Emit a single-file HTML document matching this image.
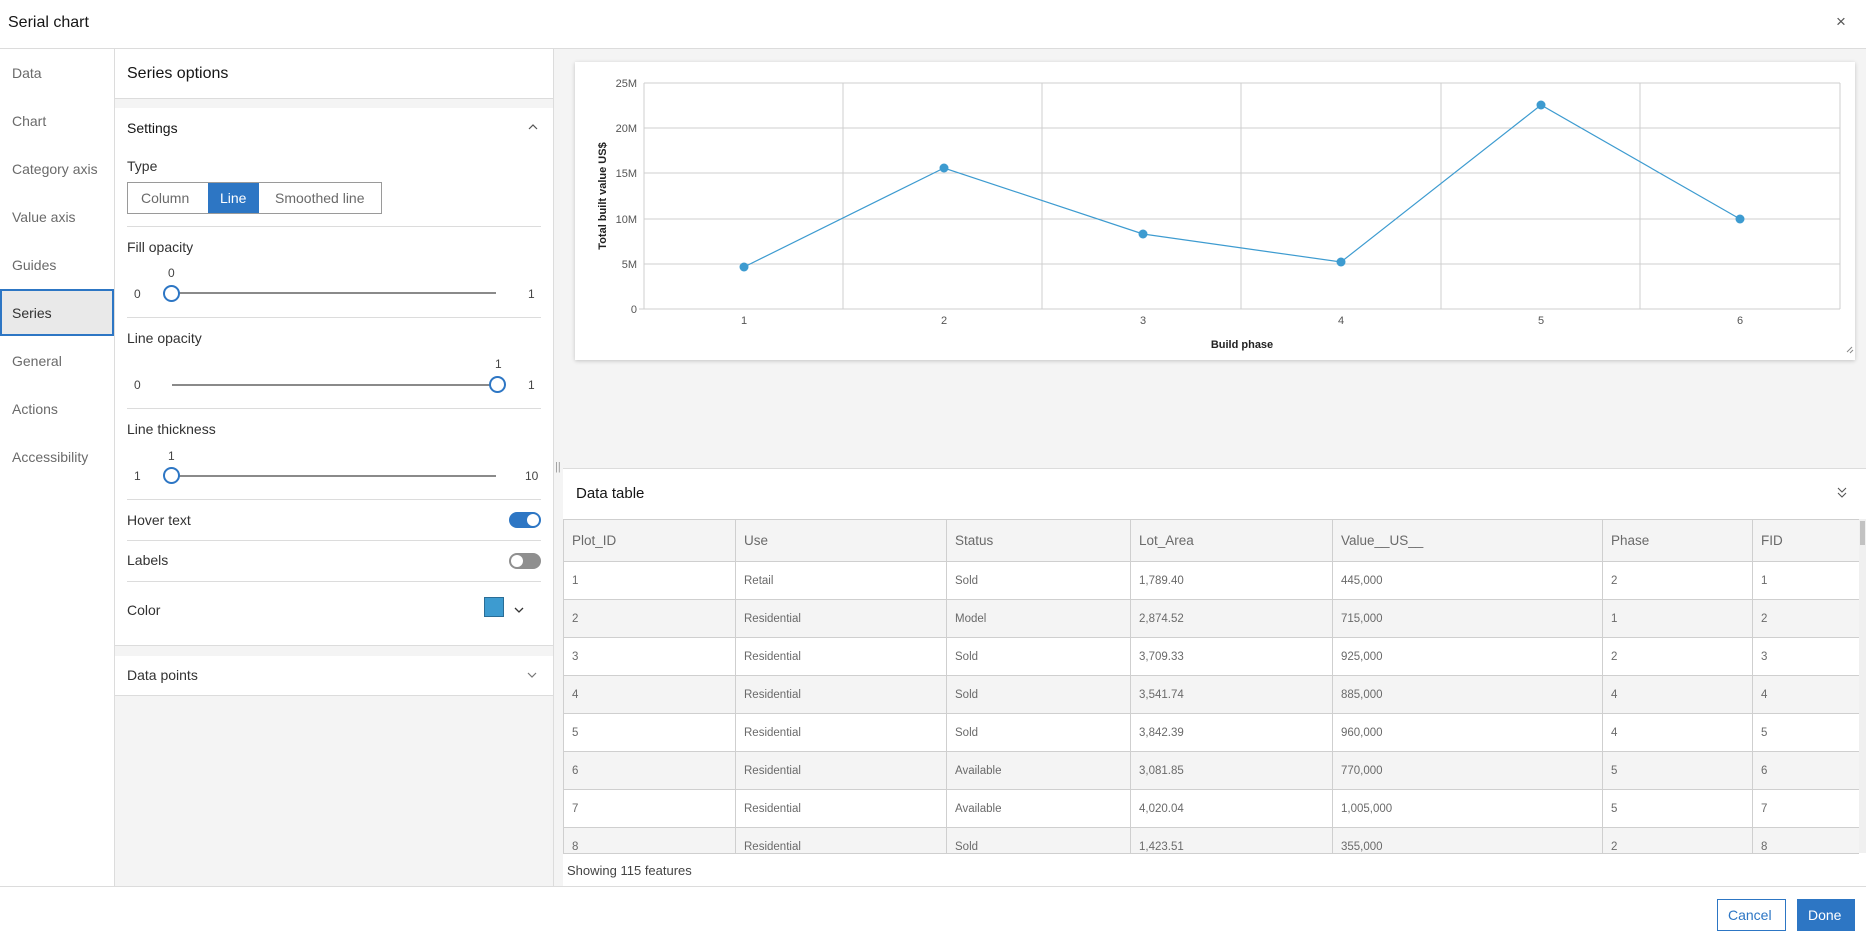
<!DOCTYPE html>
<html><head><meta charset="utf-8"><style>
*{box-sizing:border-box;margin:0;padding:0}
body{width:1866px;height:940px;position:relative;font-family:"Liberation Sans",sans-serif;background:#fff;color:#323232;overflow:hidden}
.a{position:absolute}
.t{position:absolute;white-space:nowrap}
.nav{font-size:14px;color:#6a6a6a;left:12px}
.lbl{font-size:14px;color:#323232}
.sep{position:absolute;left:127px;width:414px;height:1px;background:#dcdcdc}
.small{font-size:12px;color:#444}
.track{position:absolute;height:2px;background:#8a8a8a;left:172px;width:324px}
.thumb{position:absolute;width:17px;height:17px;border:2px solid #2d76c4;border-radius:50%;background:#fff}
td{border:1px solid #cfcfcf;font-size:11.5px;color:#6a6a6a;padding:0 8px;height:38px}
tr.h td{font-size:13.5px;height:42px;background:#f4f4f4}
tr:nth-child(odd) td{background:#f4f4f4}
table{border-collapse:collapse;position:absolute;left:563px;top:519px;width:1296px;table-layout:fixed}
</style></head><body>
<div class="t" style="left:8px;top:14px;font-size:16px;color:#151515">Serial chart</div>
<div class="t" style="left:1836px;top:12px;font-size:17px;color:#555">×</div>
<div class="a" style="left:0;top:48px;width:1866px;height:1px;background:#dcdcdc"></div>
<div class="a" style="left:114px;top:48px;width:1px;height:838px;background:#dcdcdc"></div>
<div class="t nav" style="top:65px">Data</div>
<div class="t nav" style="top:113px">Chart</div>
<div class="t nav" style="top:161px">Category axis</div>
<div class="t nav" style="top:209px">Value axis</div>
<div class="t nav" style="top:257px">Guides</div>
<div class="a" style="left:0;top:289px;width:114px;height:47px;background:#e9e9e9;border:2px solid #2d76c4"></div>
<div class="t nav" style="top:305px;color:#323232">Series</div>
<div class="t nav" style="top:353px">General</div>
<div class="t nav" style="top:401px">Actions</div>
<div class="t nav" style="top:449px">Accessibility</div>
<div class="a" style="left:115px;top:49px;width:438px;height:837px;background:#f4f4f4"></div>
<div class="a" style="left:115px;top:49px;width:438px;height:50px;background:#fff;border-bottom:1px solid #dcdcdc"></div>
<div class="t" style="left:127px;top:65px;font-size:16px;color:#151515">Series options</div>
<div class="a" style="left:115px;top:108px;width:438px;height:538px;background:#fff;border-bottom:1px solid #dcdcdc"></div>
<div class="t lbl" style="left:127px;top:120px;color:#151515">Settings</div>
<svg class="a" style="left:528px;top:123px" width="10" height="8"><path d="M1 6L5 2L9 6" fill="none" stroke="#555" stroke-width="1.2"/></svg>
<div class="t lbl" style="left:127px;top:158px">Type</div>
<div class="a" style="left:127px;top:182px;width:255px;height:32px;border:1px solid #9a9a9a"></div>
<div class="t" style="left:141px;top:190px;font-size:14px;color:#6a6a6a">Column</div>
<div class="a" style="left:208px;top:183px;width:51px;height:30px;background:#2d76c4"></div>
<div class="t" style="left:220px;top:190px;font-size:14px;color:#fff">Line</div>
<div class="t" style="left:275px;top:190px;font-size:14px;color:#6a6a6a">Smoothed line</div>
<div class="sep" style="top:226px"></div>
<div class="t lbl" style="left:127px;top:239px">Fill opacity</div>
<div class="t small" style="left:168px;top:266px">0</div>
<div class="t small" style="left:134px;top:287px">0</div>
<div class="track" style="top:292px"></div>
<div class="thumb" style="left:163px;top:285px"></div>
<div class="t small" style="left:528px;top:287px">1</div>
<div class="sep" style="top:317px"></div>
<div class="t lbl" style="left:127px;top:330px">Line opacity</div>
<div class="t small" style="left:495px;top:357px">1</div>
<div class="t small" style="left:134px;top:378px">0</div>
<div class="track" style="top:384px"></div>
<div class="thumb" style="left:489px;top:376px"></div>
<div class="t small" style="left:528px;top:378px">1</div>
<div class="sep" style="top:408px"></div>
<div class="t lbl" style="left:127px;top:421px">Line thickness</div>
<div class="t small" style="left:168px;top:449px">1</div>
<div class="t small" style="left:134px;top:469px">1</div>
<div class="track" style="top:475px"></div>
<div class="thumb" style="left:163px;top:467px"></div>
<div class="t small" style="left:525px;top:469px">10</div>
<div class="sep" style="top:499px"></div>
<div class="t lbl" style="left:127px;top:512px">Hover text</div>
<div class="a" style="left:509px;top:512px;width:32px;height:16px;border-radius:8px;background:#2d76c4"></div>
<div class="a" style="left:527px;top:514px;width:12px;height:12px;border-radius:50%;background:#fff"></div>
<div class="sep" style="top:540px"></div>
<div class="t lbl" style="left:127px;top:552px">Labels</div>
<div class="a" style="left:509px;top:553px;width:32px;height:16px;border-radius:8px;background:#8f8f8f"></div>
<div class="a" style="left:511px;top:555px;width:12px;height:12px;border-radius:50%;background:#fff"></div>
<div class="sep" style="top:581px"></div>
<div class="t lbl" style="left:127px;top:602px">Color</div>
<div class="a" style="left:484px;top:597px;width:20px;height:20px;background:#3d9bd0;border:1px solid #2a6d96"></div>
<svg class="a" style="left:514px;top:607px" width="10" height="7"><path d="M1 1L5 5L9 1" fill="none" stroke="#333" stroke-width="1.3"/></svg>
<div class="a" style="left:115px;top:656px;width:438px;height:40px;background:#fff;border-bottom:1px solid #dcdcdc"></div>
<div class="t lbl" style="left:127px;top:667px">Data points</div>
<svg class="a" style="left:527px;top:672px" width="10" height="7"><path d="M1 1L5 5L9 1" fill="none" stroke="#777" stroke-width="1.2"/></svg>
<div class="a" style="left:553px;top:48px;width:1px;height:838px;background:#dcdcdc"></div>
<div class="a" style="left:554px;top:49px;width:1312px;height:837px;background:#f4f4f4"></div>
<div class="a" style="left:575px;top:62px;width:1280px;height:298px;background:#fff;box-shadow:0 1px 4px rgba(0,0,0,.2)"></div>
<svg class="a" style="left:575px;top:62px" width="1280" height="298" font-family="Liberation Sans, sans-serif">
<g stroke="#cfcfcf" stroke-width="1">
<line x1="69" y1="21" x2="1265" y2="21"/><line x1="69" y1="66" x2="1265" y2="66"/><line x1="69" y1="111" x2="1265" y2="111"/><line x1="69" y1="157" x2="1265" y2="157"/><line x1="69" y1="202" x2="1265" y2="202"/><line x1="64" y1="247" x2="1265" y2="247"/>
<line x1="69" y1="21" x2="69" y2="247"/><line x1="268" y1="21" x2="268" y2="247"/><line x1="467" y1="21" x2="467" y2="247"/><line x1="666" y1="21" x2="666" y2="247"/><line x1="866" y1="21" x2="866" y2="247"/><line x1="1065" y1="21" x2="1065" y2="247"/><line x1="1265" y1="21" x2="1265" y2="247"/>
</g>
<g font-size="11" fill="#555" text-anchor="end"><text x="62" y="25">25M</text><text x="62" y="70">20M</text><text x="62" y="115">15M</text><text x="62" y="161">10M</text><text x="62" y="206">5M</text><text x="62" y="251">0</text></g>
<g font-size="11" fill="#555" text-anchor="middle"><text x="169" y="262">1</text><text x="369" y="262">2</text><text x="568" y="262">3</text><text x="766" y="262">4</text><text x="966" y="262">5</text><text x="1165" y="262">6</text></g>
<text x="667" y="286" font-size="11" font-weight="bold" fill="#222" text-anchor="middle">Build phase</text>
<text transform="translate(31,134) rotate(-90)" font-size="11" font-weight="bold" fill="#222" text-anchor="middle">Total built value US$</text>
<polyline points="169,205 369,106 568,172 766,200 966,43 1165,157" fill="none" stroke="#3d9bd0" stroke-width="1.2"/>
<g fill="#3d9bd0"><circle cx="169" cy="205" r="4.5"/><circle cx="369" cy="106" r="4.5"/><circle cx="568" cy="172" r="4.5"/><circle cx="766" cy="200" r="4.5"/><circle cx="966" cy="43" r="4.5"/><circle cx="1165" cy="157" r="4.5"/></g>
<path d="M1272 290L1277 285M1275 291L1278 288" stroke="#888"/>
</svg>
<div class="t" style="left:555px;top:461px;font-size:11px;color:#999">||</div>
<div class="a" style="left:563px;top:468px;width:1303px;height:1px;background:#dcdcdc"></div>
<div class="a" style="left:563px;top:469px;width:1303px;height:417px;background:#fff"></div>
<div class="t" style="left:576px;top:485px;font-size:15px;color:#151515">Data table</div>
<svg class="a" style="left:1837px;top:487px" width="10" height="12"><path d="M1 1L5 5L9 1M1 6L5 10L9 6" fill="none" stroke="#555" stroke-width="1.1"/></svg>
<div class="a" style="left:563px;top:519px;width:1296px;height:334px;overflow:hidden">
<table style="left:0;top:0">
<colgroup><col style="width:172px"><col style="width:211px"><col style="width:184px"><col style="width:202px"><col style="width:270px"><col style="width:150px"><col style="width:107px"></colgroup>
<tr class="h"><td>Plot_ID</td><td>Use</td><td>Status</td><td>Lot_Area</td><td>Value__US__</td><td>Phase</td><td>FID</td></tr>
<tr><td>1</td><td>Retail</td><td>Sold</td><td>1,789.40</td><td>445,000</td><td>2</td><td>1</td></tr>
<tr><td>2</td><td>Residential</td><td>Model</td><td>2,874.52</td><td>715,000</td><td>1</td><td>2</td></tr>
<tr><td>3</td><td>Residential</td><td>Sold</td><td>3,709.33</td><td>925,000</td><td>2</td><td>3</td></tr>
<tr><td>4</td><td>Residential</td><td>Sold</td><td>3,541.74</td><td>885,000</td><td>4</td><td>4</td></tr>
<tr><td>5</td><td>Residential</td><td>Sold</td><td>3,842.39</td><td>960,000</td><td>4</td><td>5</td></tr>
<tr><td>6</td><td>Residential</td><td>Available</td><td>3,081.85</td><td>770,000</td><td>5</td><td>6</td></tr>
<tr><td>7</td><td>Residential</td><td>Available</td><td>4,020.04</td><td>1,005,000</td><td>5</td><td>7</td></tr>
<tr><td>8</td><td>Residential</td><td>Sold</td><td>1,423.51</td><td>355,000</td><td>2</td><td>8</td></tr>
</table></div>
<div class="a" style="left:563px;top:853px;width:1296px;height:1px;background:#cfcfcf"></div>
<div class="a" style="left:1859px;top:519px;width:7px;height:334px;background:#f0f0f0"></div>
<div class="a" style="left:1860px;top:521px;width:5px;height:24px;background:#c2c2c2"></div>
<div class="t" style="left:567px;top:863px;font-size:13px;color:#444">Showing 115 features</div>
<div class="a" style="left:0;top:886px;width:1866px;height:1px;background:#dcdcdc"></div>
<div class="a" style="left:1717px;top:899px;width:69px;height:32px;border:1px solid #2d76c4;background:#fff"></div>
<div class="t" style="left:1728px;top:907px;font-size:14px;color:#2d76c4">Cancel</div>
<div class="a" style="left:1797px;top:899px;width:58px;height:32px;background:#2d76c4"></div>
<div class="t" style="left:1808px;top:907px;font-size:14px;color:#fff">Done</div>
</body></html>
